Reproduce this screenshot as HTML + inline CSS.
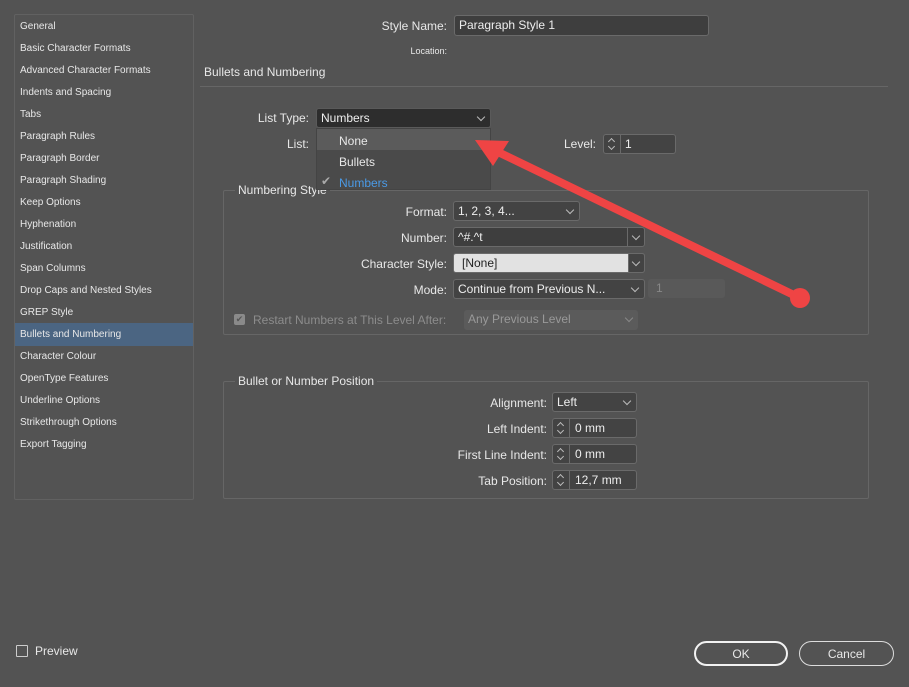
<!DOCTYPE html>
<html><head><meta charset="utf-8"><style>
body{margin:0;width:909px;height:687px;background:#535353;font-family:"Liberation Sans",sans-serif;color:#e8e8e8;position:relative;overflow:hidden}
.a{position:absolute;white-space:nowrap}
.l{position:absolute;font-size:12px;text-align:right;line-height:14px}
.sb{position:absolute;left:14px;top:14px;width:178px;height:484px;border:1px solid #616161;border-radius:2px}
.sb div{position:absolute;left:5px;font-size:10px;line-height:22px;width:173px}
.box{position:absolute;box-sizing:border-box;border:1px solid #6a6a6a;border-radius:3px;background:#434343;font-size:12px;line-height:19px;padding-left:4px;color:#eee}
.chev{position:absolute;right:6px;top:5px;width:5px;height:5px;border-right:1px solid #bbb;border-bottom:1px solid #bbb;transform:rotate(45deg)}
.grp{position:absolute;box-sizing:border-box;border:1px solid #666;border-radius:2px}
.gt{position:absolute;font-size:12px;background:#535353;padding:0 3px}
.spin{position:absolute;left:0;top:0;width:17px;height:100%;border-right:1px solid #6a6a6a;box-sizing:border-box}
.spin:before{content:"";position:absolute;left:5px;top:4px;width:4px;height:4px;border-left:1px solid #bbb;border-top:1px solid #bbb;transform:rotate(45deg)}
.spin:after{content:"";position:absolute;left:5px;bottom:4px;width:4px;height:4px;border-right:1px solid #bbb;border-bottom:1px solid #bbb;transform:rotate(45deg)}
.btnp{position:absolute;width:17px;right:0;top:0;height:100%;border-left:1px solid #6a6a6a;box-sizing:border-box}
</style></head><body>
<div class="sb">
<div style="top:1px">General</div>
<div style="top:23px">Basic Character Formats</div>
<div style="top:45px">Advanced Character Formats</div>
<div style="top:67px">Indents and Spacing</div>
<div style="top:89px">Tabs</div>
<div style="top:111px">Paragraph Rules</div>
<div style="top:133px">Paragraph Border</div>
<div style="top:155px">Paragraph Shading</div>
<div style="top:177px">Keep Options</div>
<div style="top:199px">Hyphenation</div>
<div style="top:221px">Justification</div>
<div style="top:243px">Span Columns</div>
<div style="top:265px">Drop Caps and Nested Styles</div>
<div style="top:287px">GREP Style</div>
<div style="top:308px;left:0;padding-left:5px;background:#4b6582;line-height:23px">Bullets and Numbering</div>
<div style="top:331px">Character Colour</div>
<div style="top:353px">OpenType Features</div>
<div style="top:375px">Underline Options</div>
<div style="top:397px">Strikethrough Options</div>
<div style="top:419px">Export Tagging</div>
</div>

<div class="l" style="right:462px;top:19px">Style Name:</div>
<div class="box" style="left:454px;top:15px;width:255px;height:21px;background:#3e3e3e">Paragraph Style 1</div>
<div class="l" style="right:462px;top:44px;font-size:9px">Location:</div>
<div class="a" style="left:204px;top:65px;font-size:12px">Bullets and Numbering</div>
<div class="a" style="left:200px;top:86px;width:688px;height:1px;background:#666"></div>

<div class="l" style="right:600px;top:111px">List Type:</div>
<div class="l" style="right:600px;top:137px">List:</div>
<div class="l" style="right:313px;top:137px">Level:</div>
<div class="box" style="left:603px;top:134px;width:73px;height:20px;padding-left:21px"><span class="spin"></span>1</div>

<div class="grp" style="left:223px;top:190px;width:646px;height:145px"></div>
<div class="gt" style="left:235px;top:183px">Numbering Style</div>

<div class="box" style="left:316px;top:108px;width:175px;height:20px;background:#2d2d2d;border-color:#5a5a5a">Numbers<span class="chev"></span></div>
<div class="a" style="left:316px;top:128px;width:175px;height:62px;background:#4a4a4a;border:1px solid #444;box-sizing:border-box;font-size:12px">
<div class="a" style="left:0;top:0;width:173px;height:21px;background:#5b5b5b"></div>
<div class="a" style="left:22px;top:5px">None</div>
<div class="a" style="left:22px;top:26px">Bullets</div>
<div class="a" style="left:4px;top:45px;color:#aaa">✔</div>
<div class="a" style="left:22px;top:47px;color:#4a9ae6">Numbers</div>
</div>

<div class="l" style="right:462px;top:205px">Format:</div>
<div class="box" style="left:453px;top:201px;width:127px;height:20px">1, 2, 3, 4...<span class="chev"></span></div>
<div class="l" style="right:462px;top:231px">Number:</div>
<div class="box" style="left:453px;top:227px;width:192px;height:20px;background:#3e3e3e">^#.^t<span class="btnp"><span class="chev" style="right:5px"></span></span></div>
<div class="l" style="right:462px;top:257px">Character Style:</div>
<div class="box" style="left:453px;top:253px;width:192px;height:20px;background:#e2e2e2;color:#222;padding-left:8px">[None]<span class="btnp" style="background:#434343;right:-1px;top:-1px;height:20px;border:1px solid #6a6a6a;border-radius:0 3px 3px 0"><span class="chev" style="right:5px"></span></span></div>
<div class="l" style="right:462px;top:283px">Mode:</div>
<div class="box" style="left:453px;top:279px;width:192px;height:20px">Continue from Previous N...<span class="chev"></span></div>
<div class="box" style="left:648px;top:279px;width:77px;height:19px;background:#595959;border:none;color:#888;padding-left:8px">1</div>
<div class="a" style="left:234px;top:314px;width:11px;height:11px;background:#8a8a8a;border-radius:2px;color:#555;font-size:9px;line-height:11px;text-align:center">✔</div>
<div class="a" style="left:253px;top:313px;font-size:12px;color:#8c8c8c">Restart Numbers at This Level After:</div>
<div class="box" style="left:464px;top:310px;width:174px;height:20px;background:#5b5b5b;border:none;color:#999">Any Previous Level<span class="chev" style="border-color:#888"></span></div>

<div class="grp" style="left:223px;top:381px;width:646px;height:118px"></div>
<div class="gt" style="left:235px;top:374px">Bullet or Number Position</div>
<div class="l" style="right:362px;top:396px">Alignment:</div>
<div class="box" style="left:552px;top:392px;width:85px;height:20px">Left<span class="chev"></span></div>
<div class="l" style="right:362px;top:422px">Left Indent:</div>
<div class="box" style="left:552px;top:418px;width:85px;height:20px;padding-left:22px"><span class="spin"></span>0 mm</div>
<div class="l" style="right:362px;top:448px">First Line Indent:</div>
<div class="box" style="left:552px;top:444px;width:85px;height:20px;padding-left:22px"><span class="spin"></span>0 mm</div>
<div class="l" style="right:362px;top:474px">Tab Position:</div>
<div class="box" style="left:552px;top:470px;width:85px;height:20px;padding-left:22px"><span class="spin"></span>12,7 mm</div>

<div class="a" style="left:16px;top:645px;width:10px;height:10px;border:1px solid #ccc;border-radius:1px"></div>
<div class="a" style="left:35px;top:644px;font-size:12px">Preview</div>
<div class="a" style="left:694px;top:641px;width:94px;height:25px;box-sizing:border-box;border:2px solid #f2f2f2;border-radius:13px;text-align:center;line-height:22px;font-size:12px">OK</div>
<div class="a" style="left:799px;top:641px;width:95px;height:25px;box-sizing:border-box;border:1px solid #ddd;border-radius:13px;text-align:center;line-height:24px;font-size:12px">Cancel</div>

<svg class="a" style="left:0;top:0" width="909" height="687">
<line x1="800" y1="298" x2="498" y2="152" stroke="#ef4444" stroke-width="8" stroke-linecap="round"/>
<polygon points="475,140 509,141 493,166" fill="#ef4444"/>
<circle cx="800" cy="298" r="10" fill="#ef4444"/>
</svg>
</body></html>
